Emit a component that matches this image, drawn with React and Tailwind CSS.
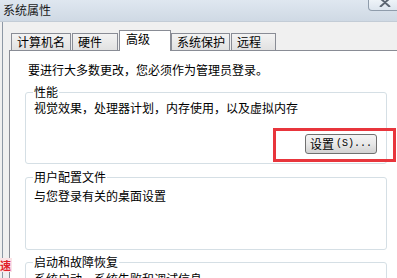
import React from "react";

const tabs = [
  { label: "计算机名", w: "w-[60px]" },
  { label: "硬件", w: "w-[46px]" },
  { label: "高级", w: "w-[52px]", active: true },
  { label: "系统保护", w: "w-[59px]" },
  { label: "远程", w: "w-[45px]" },
];

function Group({ title, className, children }) {
  return (
    <div className={`relative w-[362px] shrink-0 border border-[#d5dfe5] rounded-[3px] ${className}`}>
      <span className="absolute -top-[8px] left-[7px] bg-white px-px leading-[14px]">{title}</span>
      {children}
    </div>
  );
}

export default function App() {
  return (
    <div className="relative w-[397px] h-[278px] overflow-hidden bg-[#f0f0f0] text-[12px] text-black font-['Noto_Sans_CJK_SC','Liberation_Sans',sans-serif]">
      {/* title bar */}
      <div className="flex h-[22px] items-start bg-gradient-to-b from-[#dfe7f0] to-[#cfd9e4] border-b border-[#c3ccd6]">
        <span className="ml-[3px] mt-[3px] leading-[14px] text-[#1a1a1a]">系统属性</span>
        <div className="ml-auto mr-[-3px] flex h-[11px] w-[32px] items-start justify-center rounded-b-[4px] border border-t-0 border-[#8f9cab] bg-gradient-to-b from-[#eef3f8] to-[#dde5ee]">
          <svg width="12" height="9" viewBox="0 0 12 9" className="-mt-[2px] ml-[2px]">
            <path d="M1 0 L6 4.5 L11 0 M1 9 L6 4.5 L11 9" stroke="#5c6672" strokeWidth="2" fill="none" />
          </svg>
        </div>
      </div>

      <div className="flex h-[256px]">
        {/* left frame */}
        <div className="ml-[2px] w-[7px] shrink-0 border-l border-[#8d98a5]" />

        <div className="flex min-h-0 flex-1 flex-col">
          {/* tabs */}
          <div className="flex h-[28px] shrink-0 items-end pl-[2px]">
            {tabs.map((t) =>
              t.active ? (
                <div
                  key={t.label}
                  className={`${t.w} relative z-10 -mb-px h-[21px] border border-b-0 border-[#898c95] bg-white pl-[6px] pt-[1px] leading-[14px]`}
                >
                  {t.label}
                </div>
              ) : (
                <div
                  key={t.label}
                  className={`${t.w} mr-px h-[17px] border border-b-0 border-[#898c95] bg-gradient-to-b from-[#f3f3f3] to-[#e1e1e1] pl-[5px] pt-px leading-[14px]`}
                >
                  {t.label}
                </div>
              )
            )}
          </div>

          {/* panel */}
          <div className="min-h-0 flex-1 overflow-hidden border-l border-t border-[#898c95] bg-white pl-[15px] pt-[12px]">
            <p className="ml-[3px] leading-[14px]">要进行大多数更改，您必须作为管理员登录。</p>

            <Group title="性能" className="mt-[15px] h-[72px]">
              <p className="pl-[8px] pt-[8px] leading-[14px]">视觉效果，处理器计划，内存使用，以及虚拟内存</p>
              <div className="mt-[19px] flex justify-end pr-[9px]">
                <button className="flex h-[20px] w-[72px] items-center justify-center rounded-[3px] border border-[#707070] bg-gradient-to-b from-[#f4f4f4] via-[#e8e8e8] to-[#d2d2d2] leading-[14px]">
                  设置
                  <span className="ml-[2px] font-['Liberation_Mono',monospace] text-[10px]">(S)...</span>
                </button>
              </div>
            </Group>

            <Group title="用户配置文件" className="mt-[13px] h-[73px]">
              <p className="pl-[8px] pt-[11px] leading-[14px]">与您登录有关的桌面设置</p>
            </Group>

            <Group title="启动和故障恢复" className="mt-[12px] h-[73px]">
              <p className="pl-[8px] pt-[9px] leading-[14px]">系统启动，系统失败和调试信息</p>
            </Group>
          </div>
        </div>
      </div>

      {/* red annotation box */}
      <div className="absolute left-[273px] top-[128px] h-[34px] w-[123px] border-[3px] border-[#e8353c]" />

      {/* clipped glyph from a window behind */}
      <span className="absolute left-[-1px] top-[258px] bg-[#fbe3e6] px-px text-[11px] font-bold leading-[14px] text-[#e0202a]">速</span>
    </div>
  );
}
